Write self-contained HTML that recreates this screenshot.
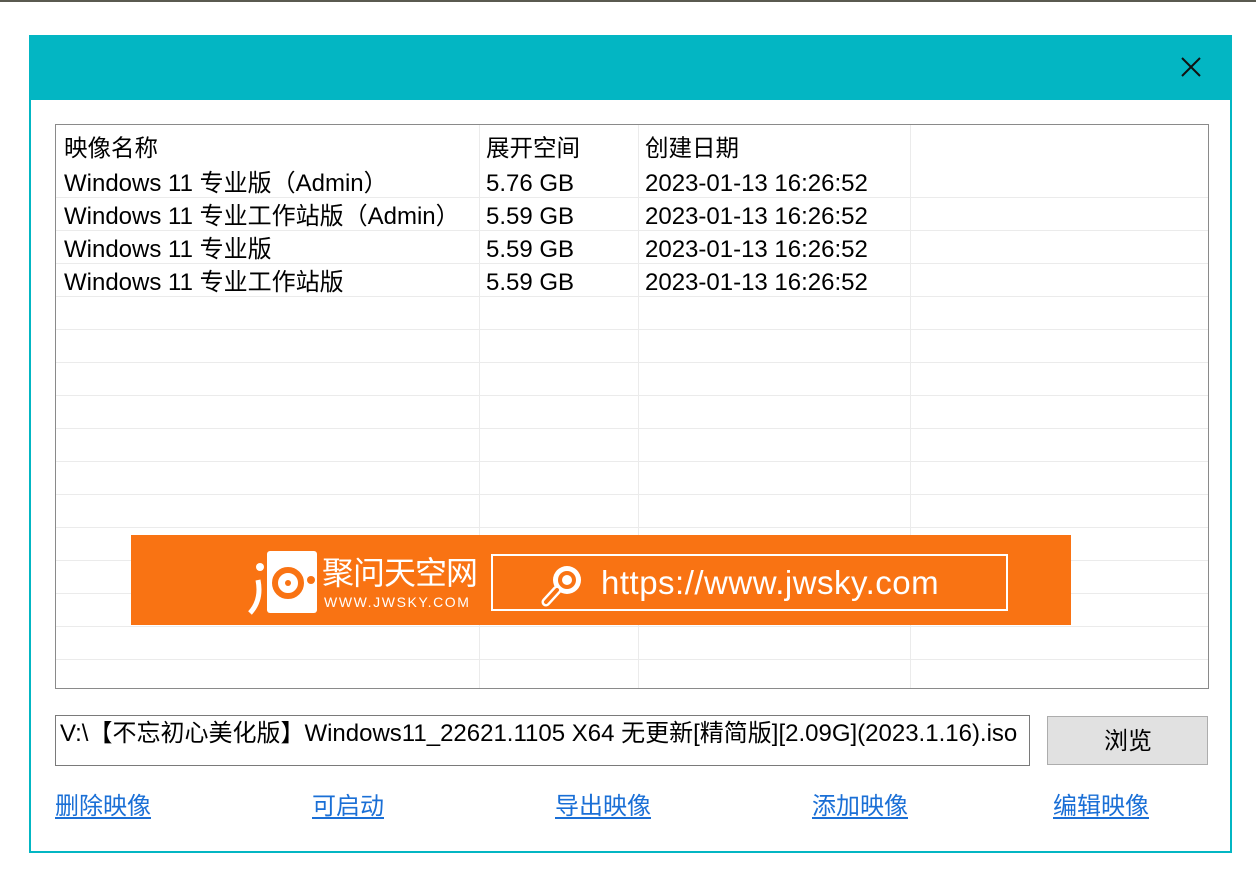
<!DOCTYPE html>
<html><head><meta charset="utf-8"><style>
*{margin:0;padding:0;box-sizing:border-box}
body{width:1256px;height:880px;background:#fff;position:relative;overflow:hidden;font-family:"Liberation Sans","Noto Sans CJK SC",sans-serif;color:#000}
.a{position:absolute}
.t{position:absolute;font-size:24px;line-height:26px;white-space:nowrap}
.h{position:absolute;left:0;width:1152px;height:1px;background:#ebebeb}
.v{position:absolute;top:0;width:1px;height:563px;background:#ebebeb}
.l{position:absolute;top:793px;font-size:24px;color:#1a6fd6;text-decoration:underline;text-underline-offset:3px;line-height:28px;white-space:nowrap}
</style></head><body>
<div class="a" style="left:0;top:0;width:1256px;height:2px;background:#5a5a50"></div>
<div class="a" style="left:29px;top:35px;width:1203px;height:818px;border:2px solid #03b6c3;border-top:none"></div>
<div class="a" style="left:29px;top:35px;width:1203px;height:65px;background:#03b6c3"></div>
<svg class="a" style="left:1180px;top:56px" width="22" height="22"><path d="M2 2L20 20M20 2L2 20" stroke="#111" stroke-width="2"/></svg>
<div class="a" style="left:55px;top:124px;width:1154px;height:565px;border:1px solid #8a8a8a;overflow:hidden">
 <div class="h" style="top:72px"></div><div class="h" style="top:105px"></div><div class="h" style="top:138px"></div><div class="h" style="top:171px"></div><div class="h" style="top:204px"></div><div class="h" style="top:237px"></div><div class="h" style="top:270px"></div><div class="h" style="top:303px"></div><div class="h" style="top:336px"></div><div class="h" style="top:369px"></div><div class="h" style="top:402px"></div><div class="h" style="top:435px"></div><div class="h" style="top:468px"></div><div class="h" style="top:501px"></div><div class="h" style="top:534px"></div>
 <div class="v" style="left:423px"></div><div class="v" style="left:582px"></div><div class="v" style="left:854px"></div>
 <div class="t" style="left:8px;top:10px;font-size:23.5px">映像名称</div>
 <div class="t" style="left:430px;top:10px;font-size:23.5px">展开空间</div>
 <div class="t" style="left:589px;top:10px;font-size:23.5px">创建日期</div>
 <div class="t" style="left:8px;top:46px">Windows 11 专业版（Admin）</div>
 <div class="t" style="left:8px;top:79px">Windows 11 专业工作站版（Admin）</div>
 <div class="t" style="left:8px;top:112px">Windows 11 专业版</div>
 <div class="t" style="left:8px;top:145px">Windows 11 专业工作站版</div>
 <div class="t" style="left:430px;top:46px">5.76 GB</div><div class="t" style="left:430px;top:79px">5.59 GB</div><div class="t" style="left:430px;top:112px">5.59 GB</div><div class="t" style="left:430px;top:145px">5.59 GB</div>
 <div class="t" style="left:589px;top:46px">2023-01-13 16:26:52</div><div class="t" style="left:589px;top:79px">2023-01-13 16:26:52</div><div class="t" style="left:589px;top:112px">2023-01-13 16:26:52</div><div class="t" style="left:589px;top:145px">2023-01-13 16:26:52</div>
</div>
<div class="a" style="left:131px;top:535px;width:940px;height:90px;background:#f97313"></div>
<div class="a" style="left:267px;top:551px;width:50px;height:62px;background:#fff;border-radius:3px"></div>
<svg class="a" style="left:248px;top:555px" width="70" height="60"><path d="M10 25 Q14 45 2 58" stroke="#fff" stroke-width="5" fill="none"/><circle cx="12" cy="12" r="4" fill="#fff"/><circle cx="40" cy="28" r="13" stroke="#f97313" stroke-width="6" fill="none"/><circle cx="40" cy="28" r="3" fill="#f97313"/></svg>
<div class="a" style="left:307px;top:576px;width:8px;height:8px;border-radius:50%;background:#f97313"></div>
<div class="t" style="left:322px;top:555px;font-size:32px;line-height:36px;color:#fff;letter-spacing:-1px">聚问天空网</div>
<div class="t" style="left:324px;top:594px;font-size:14px;line-height:16px;color:#fff;letter-spacing:1.6px">WWW.JWSKY.COM</div>
<div class="a" style="left:491px;top:554px;width:517px;height:57px;border:2px solid #fff"></div>
<svg class="a" style="left:540px;top:560px" width="50" height="48"><circle cx="27" cy="20" r="14" fill="#fff"/><circle cx="27" cy="20" r="9" fill="#f97313"/><circle cx="27" cy="20" r="5" fill="#fff"/><path d="M17 30L6 42" stroke="#fff" stroke-width="9" stroke-linecap="round"/><path d="M17 30L6 42" stroke="#f97313" stroke-width="4" stroke-linecap="round"/></svg>
<div class="t" style="left:601px;top:566px;font-size:33px;line-height:34px;color:#fff;letter-spacing:0.5px">https://www.jwsky.com</div>
<div class="a" style="left:55px;top:715px;width:975px;height:51px;border:1px solid #7a7a7a"></div>
<div class="t" style="left:60px;top:721px;font-size:24px">V:\【不忘初心美化版】Windows11_22621.1105 X64 无更新[精简版][2.09G](2023.1.16).iso</div>
<div class="a" style="left:1047px;top:716px;width:161px;height:49px;background:#e1e1e1;border:1px solid #adadad"></div>
<div class="t" style="left:1104px;top:729px">浏览</div>
<div class="l" style="left:55px">删除映像</div>
<div class="l" style="left:312px">可启动</div>
<div class="l" style="left:555px">导出映像</div>
<div class="l" style="left:812px">添加映像</div>
<div class="l" style="left:1053px">编辑映像</div>
</body></html>
